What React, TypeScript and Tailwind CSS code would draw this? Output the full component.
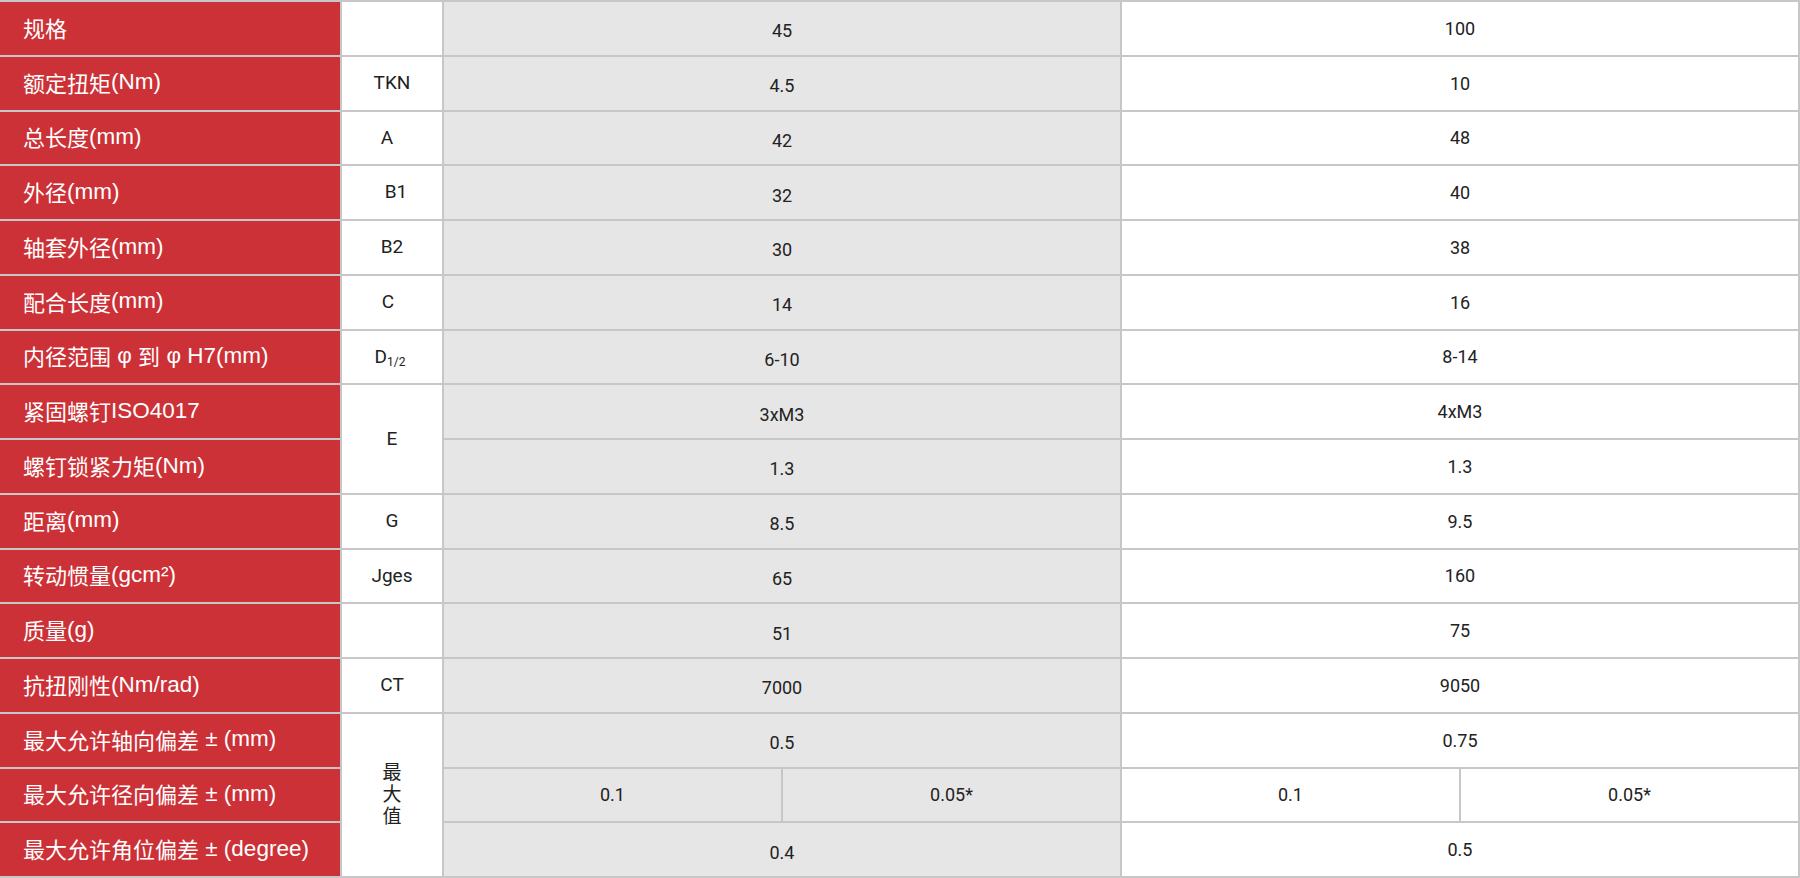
import React from "react";

type Row = {
  label: string;
  a: string | [string, string];
  b: string | [string, string];
};

const rows: Row[] = [
  { label: "规格", a: "45", b: "100" },
  { label: "额定扭矩(Nm)", a: "4.5", b: "10" },
  { label: "总长度(mm)", a: "42", b: "48" },
  { label: "外径(mm)", a: "32", b: "40" },
  { label: "轴套外径(mm)", a: "30", b: "38" },
  { label: "配合长度(mm)", a: "14", b: "16" },
  { label: "内径范围 φ 到 φ H7(mm)", a: "6-10", b: "8-14" },
  { label: "紧固螺钉ISO4017", a: "3xM3", b: "4xM3" },
  { label: "螺钉锁紧力矩(Nm)", a: "1.3", b: "1.3" },
  { label: "距离(mm)", a: "8.5", b: "9.5" },
  { label: "转动惯量(gcm²)", a: "65", b: "160" },
  { label: "质量(g)", a: "51", b: "75" },
  { label: "抗扭刚性(Nm/rad)", a: "7000", b: "9050" },
  { label: "最大允许轴向偏差 ± (mm)", a: "0.5", b: "0.75" },
  { label: "最大允许径向偏差 ± (mm)", a: ["0.1", "0.05*"], b: ["0.1", "0.05*"] },
  { label: "最大允许角位偏差 ± (degree)", a: "0.4", b: "0.5" },
];

// latin runs in the labels use an Arial-like face
const Label: React.FC<{ text: string }> = ({ text }) => {
  const parts = text.split(/([\u4e00-\u9fff]+)/).filter((p) => p !== "");
  return (
    <>
      {parts.map((p, i) =>
        /[\u4e00-\u9fff]/.test(p) ? (
          <span key={i}>{p}</span>
        ) : (
          <span key={i} className="whitespace-pre font-['Liberation_Sans',sans-serif] text-[22.5px]">
            {p}
          </span>
        )
      )}
    </>
  );
};

// code column: [row index, row span, content]
const codes: [number, number, React.ReactNode][] = [
  [0, 1, ""],
  [1, 1, "TKN"],
  [2, 1, <span className="-ml-[10px]">A</span>],
  [3, 1, <span className="ml-[8px]">B1</span>],
  [4, 1, "B2"],
  [5, 1, <span className="-ml-[8px]">C</span>],
  [
    6,
    1,
    <span className="-ml-[4px]">
      D<sub className="text-[12px]">1/2</sub>
    </span>,
  ],
  [7, 2, "E"],
  [9, 1, "G"],
  [10, 1, "Jges"],
  [11, 1, ""],
  [12, 1, "CT"],
  [
    13,
    3,
    <span className="flex flex-col items-center leading-[22px]">
      <span>最</span>
      <span>大</span>
      <span>值</span>
    </span>,
  ],
];

const rowStart = [
  "row-start-1",
  "row-start-2",
  "row-start-3",
  "row-start-4",
  "row-start-5",
  "row-start-6",
  "row-start-7",
  "row-start-8",
  "row-start-9",
  "row-start-10",
  "row-start-11",
  "row-start-12",
  "row-start-13",
  "row-start-14",
  "row-start-15",
  "row-start-16",
];
const rowSpan = ["", "row-span-1", "row-span-2", "row-span-3"];

const num = "font-['Roboto','DejaVu_Sans',sans-serif] text-[18px] text-[#222]";

const App: React.FC = () => {
  return (
    <div className="w-[1800px] h-[878px] bg-white">
      <div className="grid h-full grid-cols-[340px_100px_1fr_1fr_1fr_1fr] grid-rows-[repeat(16,1fr)] gap-[2px] bg-[#c7c7c7] py-[2px] pr-[2px]">
        {rows.map((r, i) => (
          <div
            key={"l" + i}
            className={`${rowStart[i]} col-start-1 flex items-center whitespace-nowrap bg-[#cc3137] pl-[23px] pb-[2px] font-['Noto_Sans_CJK_SC','Noto_Sans',sans-serif] text-[22px] text-white`}
          >
            <Label text={r.label} />
          </div>
        ))}

        {codes.map(([idx, span, content]) => (
          <div
            key={"c" + idx}
            className={`${rowStart[idx]} ${rowSpan[span]} col-start-2 flex items-center justify-center bg-white font-['Roboto','Noto_Sans_CJK_SC',sans-serif] text-[19px] text-[#222]`}
          >
            {content}
          </div>
        ))}

        {rows.map((r, i) =>
          Array.isArray(r.a) ? (
            <React.Fragment key={"a" + i}>
              <div className={`${rowStart[i]} col-start-3 flex items-center justify-center bg-[#e6e6e6] ${num}`}>
                {r.a[0]}
              </div>
              <div className={`${rowStart[i]} col-start-4 flex items-center justify-center bg-[#e6e6e6] ${num}`}>
                {r.a[1]}
              </div>
            </React.Fragment>
          ) : (
            <div
              key={"a" + i}
              className={`${rowStart[i]} col-start-3 col-span-2 flex items-center justify-center bg-[#e6e6e6] pt-[5px] ${num}`}
            >
              {r.a}
            </div>
          )
        )}

        {rows.map((r, i) =>
          Array.isArray(r.b) ? (
            <React.Fragment key={"b" + i}>
              <div className={`${rowStart[i]} col-start-5 flex items-center justify-center bg-white ${num}`}>
                {r.b[0]}
              </div>
              <div className={`${rowStart[i]} col-start-6 flex items-center justify-center bg-white ${num}`}>
                {r.b[1]}
              </div>
            </React.Fragment>
          ) : (
            <div
              key={"b" + i}
              className={`${rowStart[i]} col-start-5 col-span-2 flex items-center justify-center bg-white ${num}`}
            >
              {r.b}
            </div>
          )
        )}
      </div>
    </div>
  );
};

export default App;
